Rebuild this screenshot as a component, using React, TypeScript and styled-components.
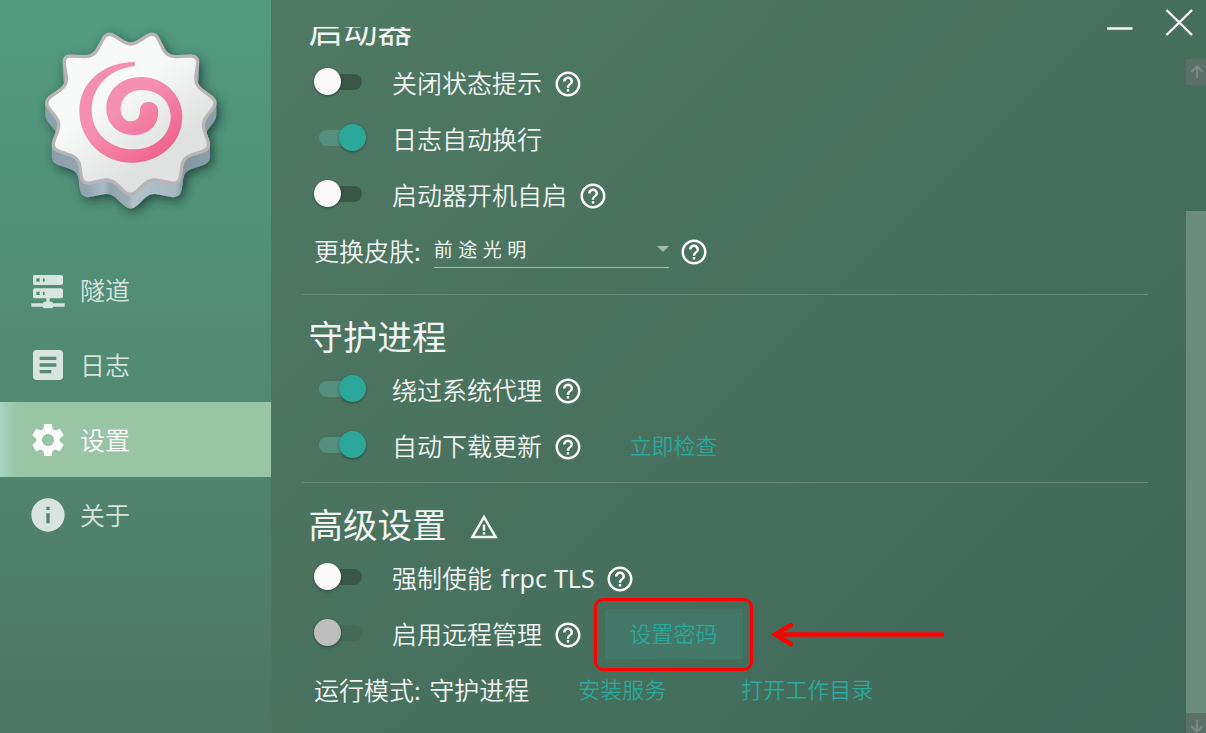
import React from 'react';
import styled, { createGlobalStyle, css } from 'styled-components';
import { MdArticle, MdHelpOutline, MdInfo, MdSettings, MdWarningAmber } from 'react-icons/md';

const GlobalStyle = createGlobalStyle`
  * { box-sizing: border-box; }
  body {
    margin: 0;
    overflow: hidden;
    font-family: "Noto Sans CJK SC", "Noto Sans", sans-serif;
    font-weight: 350;
    color: #f0f4f2;
  }
  svg { display: block; flex: none; }
`;

const Window = styled.div`
  display: flex;
  width: 1206px;
  height: 733px;
  overflow: hidden;
`;

const Sidebar = styled.nav`
  flex: none;
  width: 271px;
  background: linear-gradient(180deg, #529b81 0%, #528a74 50%, #4d7563 100%);
`;

const LogoBox = styled.div`
  height: 252px;
`;

const NavItem = styled.a<{ $active?: boolean }>`
  display: flex;
  align-items: center;
  gap: 12.5px;
  height: 75px;
  padding-left: 27.5px;
  font-size: 25px;
  color: ${(p) => (p.$active ? '#ffffff' : '#d7e4df')};
  ${(p) =>
    p.$active &&
    css`
      background: linear-gradient(90deg, #a7d4c3 0, #99c4a5 18px);
    `}
  span { padding-bottom: 1px; line-height: 36px; }
`;

const Main = styled.main`
  position: relative;
  display: flex;
  flex: 1;
  padding-top: 27px;
  background: linear-gradient(135deg, #507964 0%, #48705e 50%, #3f6759 100%);
  border-left: 1px solid #4b7462;
`;

const WindowButtons = styled.div`
  position: absolute;
  top: 8px;
  right: 13px;
  display: flex;
  gap: 31px;
`;

const Content = styled.div`
  flex: 1;
  overflow: hidden;
  padding: 0 38px 0 30px;
`;

const Section = styled.section<{ $scrolled?: boolean; $last?: number }>`
  margin-top: ${(p) => (p.$scrolled ? '-39px' : '0')};
  padding-bottom: ${(p) => p.$last ?? 0}px;
  border-bottom: ${(p) => (p.$last ? '1px solid #66877a' : 'none')};
`;

const Heading = styled.h2<{ $lift?: number }>`
  display: flex;
  align-items: center;
  gap: 22px;
  height: 67px;
  margin: 0;
  padding: 0 0 ${(p) => p.$lift ?? 0}px 6.5px;
  font-size: 34.5px;
  font-weight: 400;
  line-height: 48px;
  padding-top: 12px;
  svg { margin-top: 9px; }
`;

const Row = styled.div`
  display: flex;
  align-items: center;
  height: 56px;
  padding-left: 12px;
  font-size: 25px;
  white-space: nowrap;
`;

const Label = styled.span<{ $wide?: boolean }>`
  line-height: 36px;
  padding-bottom: 2px;
  word-spacing: ${(p) => (p.$wide ? 3 : 0)}px;
`;

const Latin = styled.span`
  font-family: "Noto Sans", sans-serif;
  font-weight: 400;
  font-size: 25px;
  word-spacing: 0.5px;
`;

const HelpIcon = styled(MdHelpOutline)`
  width: 30px;
  height: 30px;
  margin: 1px 0 0 10.5px;
  color: #fff;
`;

const Track = styled.span<{ $on?: boolean; $disabled?: boolean }>`
  position: relative;
  flex: none;
  width: 43px;
  height: 16px;
  margin: -2px 30px 0 5px;
  border-radius: 8px;
  background: ${(p) => (p.$on ? '#558f7e' : p.$disabled ? '#446a58' : '#3a574a')};
`;

const Thumb = styled.span<{ $on?: boolean; $disabled?: boolean }>`
  position: absolute;
  top: -6px;
  left: ${(p) => (p.$on ? '20px' : '-5px')};
  width: 27px;
  height: 27px;
  border-radius: 50%;
  background: ${(p) => (p.$on ? '#2ba899' : p.$disabled ? '#bdbdbd' : '#fafafa')};
  box-shadow: 0 1px 3px rgba(0, 0, 0, 0.4);
`;

const LinkButton = styled.button<{ $filled?: boolean; $gap: number }>`
  position: relative;
  height: 50px;
  margin: -1px 0 0 ${(p) => p.$gap}px;
  padding: 0 25px 3px;
  border: 0;
  border-radius: 3px;
  font: inherit;
  font-size: 22px;
  color: #2ba899;
  background: ${(p) => (p.$filled ? '#437767' : 'transparent')};
`;

const Select = styled.div`
  display: flex;
  align-items: center;
  justify-content: space-between;
  width: 235px;
  height: 38px;
  margin: -4px 0 0 13px;
  padding-bottom: 1px;
  border-bottom: 1.5px solid #a5b9b0;
  font-size: 19px;
  font-weight: 400;
  letter-spacing: 5.5px;
`;

const Caret = styled.span`
  margin-top: 2px;
  border: 6px solid transparent;
  border-top-color: #a5b9b0;
  border-bottom: 0;
`;

const ScrollBar = styled.div`
  display: flex;
  flex-direction: column;
  width: 20px;
  margin-top: 32px;
  overflow: hidden;
`;

const ScrollArrow = styled.div`
  display: flex;
  flex: none;
  align-items: center;
  justify-content: center;
  height: 26px;
  padding-left: 2px;
  background: #5a7069;
`;

const ScrollThumb = styled.div`
  flex: none;
  height: 502px;
  margin-top: 126px;
  background: #6a8b7e;
`;

const Highlight = styled.div`
  position: absolute;
  top: -11px;
  left: -11px;
  width: 159px;
  height: 73px;
  border: 3px solid #fe0000;
  border-radius: 9px;
`;

const Pointer = styled.svg`
  position: absolute;
  top: 10px;
  left: 164px;
`;

type Pt = [number, number];

const rim: Pt[] = [
  [392, 139], [463, 94], [502, 171], [596, 167], [584, 254], [654, 305],
  [605, 369], [632, 446], [549, 473], [538, 554], [450, 536], [392, 592],
  [332, 536], [247, 554], [236, 473], [153, 446], [182, 369], [131, 305],
  [203, 254], [189, 167], [280, 171], [322, 94],
];

function roundedPath(points: Pt[], cut: number) {
  return (
    points
      .map((p, i) => {
        const before = points[(i + points.length - 1) % points.length];
        const after = points[(i + 1) % points.length];
        const toward = (q: Pt) => {
          const len = Math.hypot(q[0] - p[0], q[1] - p[1]);
          return `${p[0] + ((q[0] - p[0]) * cut) / len} ${p[1] + ((q[1] - p[1]) * cut) / len}`;
        };
        return `${i ? 'L' : 'M'}${toward(before)}Q${p[0]} ${p[1]} ${toward(after)}`;
      })
      .join('') + 'Z'
  );
}

const rimPath = roundedPath(rim, 26);

function Logo() {
  return (
    <svg width="271" height="240" viewBox="0 0 813 720">
      <defs>
        <linearGradient id="face" x1="0.2" y1="0.1" x2="0.8" y2="0.9">
          <stop offset="0.35" stopColor="#f8faf9" />
          <stop offset="0.8" stopColor="#dfe2e1" />
        </linearGradient>
        <linearGradient id="side" gradientUnits="userSpaceOnUse" x1="131" y1="0" x2="654" y2="0">
          <stop offset="0" stopColor="#8b9fa9" />
          <stop offset="0.25" stopColor="#91a6b1" />
          <stop offset="0.34" stopColor="#a9bac3" />
          <stop offset="0.38" stopColor="#90a4ae" />
          <stop offset="0.49" stopColor="#9caeb7" />
          <stop offset="0.51" stopColor="#b4c3ca" />
          <stop offset="0.76" stopColor="#a7b8c1" />
          <stop offset="0.81" stopColor="#8397a0" />
          <stop offset="1" stopColor="#8ca2ad" />
        </linearGradient>
        <linearGradient id="swirl" x1="0.3" y1="0.3" x2="0.8" y2="0.9">
          <stop offset="0.25" stopColor="#f48fb1" />
          <stop offset="1" stopColor="#f06590" />
        </linearGradient>
        <filter id="shadow" x="-20%" y="-20%" width="140%" height="140%">
          <feDropShadow dx="9" dy="10" stdDeviation="16" floodColor="#12382d" floodOpacity="0.8" />
        </filter>
      </defs>
      <g filter="url(#shadow)">
        {[38, 34, 30, 26, 22, 18, 14, 10, 6, 2].map((dy) => (
          <path
            key={dy}
            d={rimPath}
            transform={`translate(0 ${dy})`}
            fill="url(#side)"
            stroke="url(#side)"
            strokeWidth="8"
          />
        ))}
      </g>
      <path d={rimPath} fill="url(#face)" stroke="#b9b5b6" strokeWidth="10" strokeLinejoin="round" />
      <path
        fill="url(#swirl)"
        d="M403 186C308 186 238 250 238 332C238 420 308 488 395 488C480 488 547 430 547 348C547 283 490 231 425 231C365 231 319 270 319 325C319 372 353 405 400 405C443 405 475 378 475 335C475 316 462 306 446 306C431 306 420 316 420 330C420 350 412 364 393 364C375 364 362 350 362 326C362 293 388 270 425 270C475 270 512 303 512 350C512 405 463 448 400 448C330 448 275 398 275 330C275 262 325 208 403 198Q409 192 403 186Z"
      />
    </svg>
  );
}

function ServerNetworkIcon() {
  return (
    <svg width="40" height="40" viewBox="0 0 24 24" fill="currentColor">
      <path d="M13,19H14A1,1 0 0,1 15,20H22V22H15A1,1 0 0,1 14,23H10A1,1 0 0,1 9,22H2V20H9A1,1 0 0,1 10,19H11V17H4A1,1 0 0,1 3,16V12A1,1 0 0,1 4,11H20A1,1 0 0,1 21,12V16A1,1 0 0,1 20,17H13V19M4,3H20A1,1 0 0,1 21,4V8A1,1 0 0,1 20,9H4A1,1 0 0,1 3,8V4A1,1 0 0,1 4,3M9,7H10V5H9V7M9,15H10V13H9V15M5,5V7H7V5H5M5,13V15H7V13H5Z" />
    </svg>
  );
}

function Arrow({ down }: { down?: boolean }) {
  return (
    <svg width="14" height="14" viewBox="0 0 14 14" fill="none" stroke="#788d85" strokeWidth="2">
      <path d={down ? 'M7 1V12M1.5 7L7 12.5L12.5 7' : 'M7 13V2M1.5 7L7 1.5L12.5 7'} />
    </svg>
  );
}

function Toggle({ on, disabled }: { on?: boolean; disabled?: boolean }) {
  return (
    <Track $on={on} $disabled={disabled}>
      <Thumb $on={on} $disabled={disabled} />
    </Track>
  );
}

export default function App() {
  return (
    <Window>
      <GlobalStyle />
      <Sidebar>
        <LogoBox><Logo /></LogoBox>
        <NavItem><ServerNetworkIcon /><span>隧道</span></NavItem>
        <NavItem><MdArticle size={40} /><span>日志</span></NavItem>
        <NavItem $active><MdSettings size={40} /><span>设置</span></NavItem>
        <NavItem><MdInfo size={40} /><span>关于</span></NavItem>
      </Sidebar>
      <Main>
        <Content>
          <Section $scrolled $last={15}>
            <Heading>启动器</Heading>
            <Row><Toggle /><Label>关闭状态提示</Label><HelpIcon /></Row>
            <Row><Toggle on /><Label>日志自动换行</Label></Row>
            <Row><Toggle /><Label>启动器开机自启</Label><HelpIcon /></Row>
            <Row>
              <Label>更换皮肤:</Label>
              <Select>前途光明<Caret /></Select>
              <HelpIcon />
            </Row>
          </Section>
          <Section $last={8}>
            <Heading>守护进程</Heading>
            <Row><Toggle on /><Label>绕过系统代理</Label><HelpIcon /></Row>
            <Row>
              <Toggle on /><Label>自动下载更新</Label><HelpIcon />
              <LinkButton $gap={22}>立即检查</LinkButton>
            </Row>
          </Section>
          <Section>
            <Heading>高级设置<MdWarningAmber size={30} /></Heading>
            <Row><Toggle /><Label $wide>强制使能 <Latin>frpc TLS</Latin></Label><HelpIcon /></Row>
            <Row>
              <Toggle disabled /><Label>启用远程管理</Label><HelpIcon />
              <LinkButton $gap={22} $filled>
                设置密码
                <Highlight />
                <Pointer width="176" height="32" viewBox="0 0 176 32">
                  <path d="M12 15.5H175" stroke="#fe0000" strokeWidth="4.5" />
                  <path d="M22 6L6 15.5L22 25" fill="none" stroke="#fe0000" strokeWidth="4.5" strokeLinecap="round" />
                </Pointer>
              </LinkButton>
            </Row>
            <Row>
              <Label $wide>运行模式: 守护进程</Label>
              <LinkButton $gap={24}>安装服务</LinkButton>
              <LinkButton $gap={25}>打开工作目录</LinkButton>
            </Row>
          </Section>
        </Content>
        <ScrollBar>
          <ScrollArrow><Arrow /></ScrollArrow>
          <ScrollThumb />
          <ScrollArrow><Arrow down /></ScrollArrow>
        </ScrollBar>
        <WindowButtons>
          <svg width="28" height="28" viewBox="0 0 28 28" stroke="#fff" strokeWidth="2.4"><path d="M1 20.5H26.5" /></svg>
          <svg width="28" height="28" viewBox="0 0 28 28" stroke="#fff" strokeWidth="2.4"><path d="M1.5 2L27 27M27 2L1.5 27" /></svg>
        </WindowButtons>
      </Main>
    </Window>
  );
}
